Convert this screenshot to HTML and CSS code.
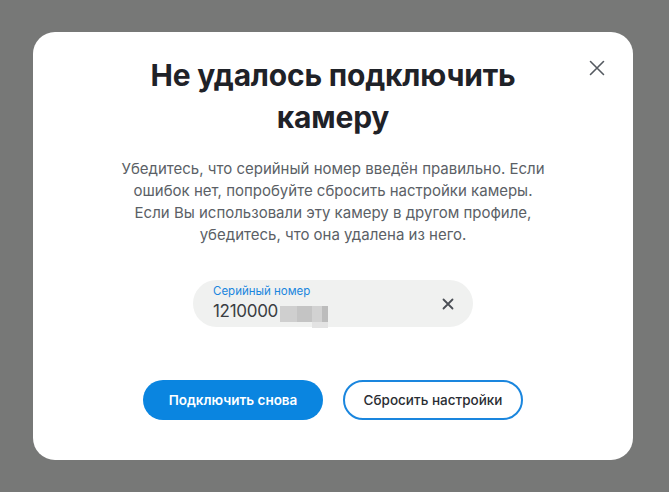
FILE: index.html
```html
<!DOCTYPE html>
<html lang="ru">
<head>
<meta charset="utf-8">
<link rel="stylesheet" href="styles.css">
</head>
<body>
<div class="overlay">
  <div class="modal">
    <button class="close" aria-label="Закрыть">
      <svg width="16" height="16" viewBox="0 0 16 16"><path d="M1.5 1.5L14.5 14.5M14.5 1.5L1.5 14.5" stroke="#555a61" stroke-width="1.6" stroke-linecap="round"/></svg>
    </button>
    <h1 class="title">Не удалось подключить<br>камеру</h1>
    <p class="text">Убедитесь, что серийный номер введён правильно. Если<br>ошибок нет, попробуйте сбросить настройки камеры.<br>Если Вы использовали эту камеру в другом профиле,<br>убедитесь, что она удалена из него.</p>
    <div class="field">
      <div class="field-body">
        <div class="label">Серийный номер</div>
        <div class="value">1210000<span class="mosaic"><span class="m1"></span><span class="m2"></span><span class="m3"></span><span class="m4"></span><span class="m5"></span><span class="m6"></span></span></div>
      </div>
      <svg class="clear" width="12" height="12" viewBox="0 0 12 12"><path d="M1.5 1.5L10.5 10.5M10.5 1.5L1.5 10.5" stroke="#4a4e55" stroke-width="1.8" stroke-linecap="round"/></svg>
    </div>
    <div class="actions">
      <button class="btn primary">Подключить снова</button>
      <button class="btn secondary">Сбросить настройки</button>
    </div>
  </div>
</div>
</body>
</html>
```
FILE: styles.css
```css
* { box-sizing: border-box; }
html, body { margin: 0; padding: 0; }
body {
  width: 669px;
  height: 492px;
  background: #777877;
  font-family: Inter, "Noto Sans", sans-serif;
  overflow: hidden;
}
.overlay {
  padding: 32px 0 0 33px;
}
.modal {
  position: relative;
  width: 600px;
  height: 428px;
  background: #fff;
  border-radius: 22px;
  padding: 22px 40px 0;
  display: flex;
  flex-direction: column;
  align-items: center;
}
.close {
  position: absolute;
  top: 28px;
  right: 28px;
  width: 16px;
  height: 16px;
  padding: 0;
  border: 0;
  background: none;
  display: flex;
}
.title {
  margin: 0;
  font-size: 30px;
  line-height: 42px;
  font-weight: 700;
  color: #1f2228;
  text-align: center;
  letter-spacing: -0.2px;
}
.text {
  margin: 20px 0 0;
  font-size: 15px;
  line-height: 22px;
  color: #5b5f66;
  text-align: center;
  white-space: nowrap;
}
.field {
  margin-top: 34px;
  width: 280px;
  height: 47px;
  border-radius: 24px;
  background: #f0f1f0;
  display: flex;
  align-items: center;
  padding: 0 19px 0 20px;
}
.field-body { flex: 1; margin-top: -2px; }
.label {
  font-size: 11.5px;
  line-height: 14px;
  color: #1a86de;
  margin-bottom: 3px;
}
.value {
  font-size: 17px;
  line-height: 21px;
  color: #3a3d42;
  display: flex;
  align-items: flex-end;
  letter-spacing: -0.3px;
}
.mosaic {
  display: grid;
  grid-template-columns: 17px 15px 10px 6px;
  grid-template-rows: 16px 6px;
  margin-bottom: -6px;
  margin-left: 2px;
}
.m1 { background: #cfcfcf; }
.m2 { background: #c4c4c4; }
.m3 { background: #d2d2d2; }
.m4 { background: #bcbcbc; }
.m5 { background: transparent; grid-column: span 2; }
.m6 { background: #e3e3e3; grid-column: span 2; }
.clear { flex: none; }
.actions {
  margin-top: 53px;
  display: flex;
  gap: 20px;
}
.btn {
  width: 180px;
  height: 40px;
  border-radius: 20px;
  font-family: Inter, "Noto Sans", sans-serif;
  font-size: 13.5px;
  font-weight: 600;
  cursor: pointer;
}
.primary {
  background: #0a85e0;
  color: #fff;
  border: 0;
}
.secondary {
  background: #fff;
  color: #2a2d33;
  border: 2px solid #1a86de;
  font-weight: 500;
}
```
